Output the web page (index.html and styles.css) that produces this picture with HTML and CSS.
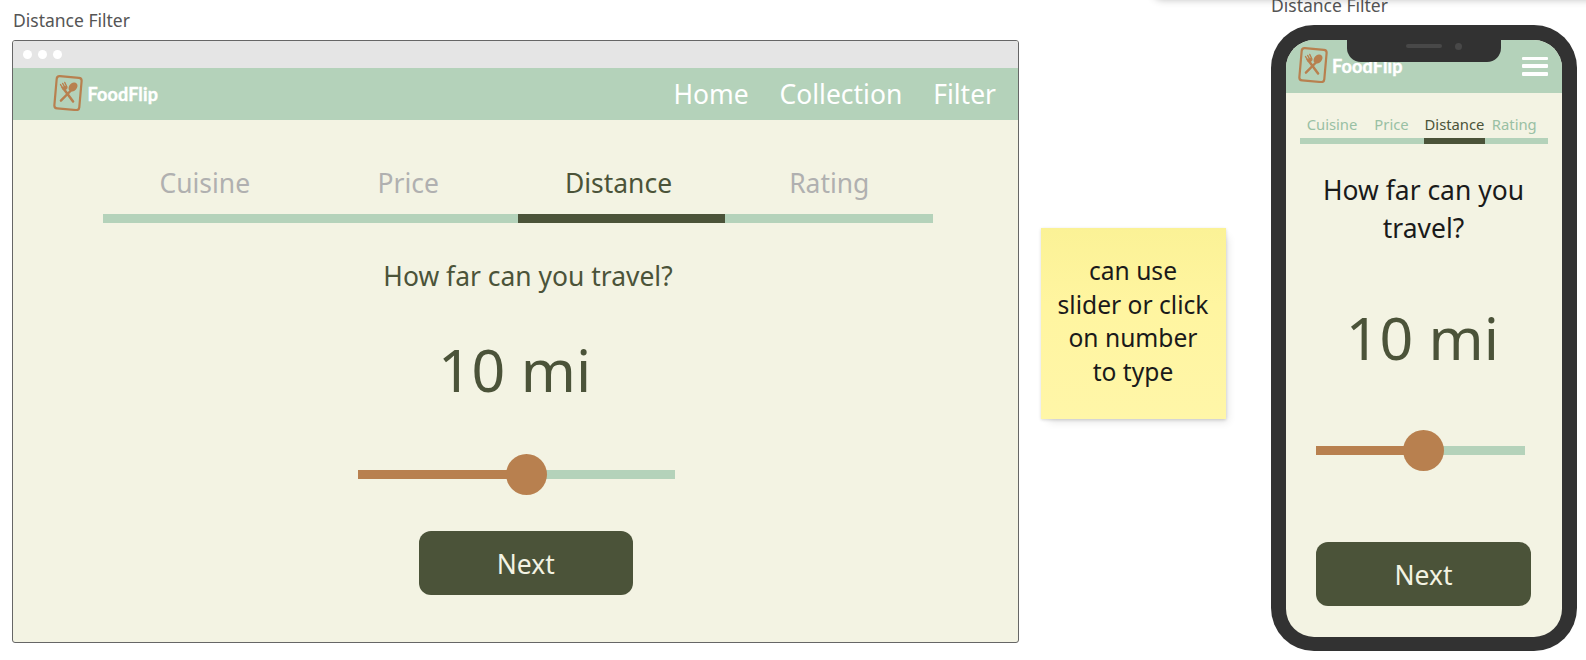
FILE: index.html
```html
<!DOCTYPE html>
<html lang="en">
<head>
<meta charset="utf-8">
<title>Distance Filter</title>
<link rel="stylesheet" href="styles.css">
</head>
<body>
<svg class="defs" aria-hidden="true">
  <symbol id="logo" viewBox="0 0 30 36">
    <g transform="rotate(5 15 18)" fill="none" stroke="#b8804f">
      <rect x="2.5" y="1.9" width="25" height="32.4" rx="3" stroke-width="2.2"/>
      <path d="M10.5 14.5 20.8 26" stroke-width="2.5" stroke-linecap="round"/>
      <path d="M17.5 15.5 8.6 26.2" stroke-width="2.4" stroke-linecap="round"/>
      <path d="M6.8 10.2 10 14.2M8.8 8.9 11.6 12.9M10.8 7.7 13.4 12.2" stroke-width="1.3" stroke-linecap="round"/>
      <path d="M8.3 13.2q2.8 4.2 5.2.1l-.6-2z" fill="#b8804f" stroke-width="1"/>
      <ellipse cx="19.5" cy="11.6" rx="3.8" ry="5.1" transform="rotate(40 19.5 11.6)" fill="#b8804f" stroke="none"/>
    </g>
  </symbol>
</svg>
<main class="board">
  <div class="toolbar"></div>
  <section class="desktop">
    <div class="frame-label">Distance Filter</div>
    <div class="window">
      <div class="chrome"><i></i><i></i><i></i></div>
      <header class="header">
        <div class="brand"><svg class="brand-icon"><use href="#logo"/></svg><span class="brand-name">FoodFlip</span></div>
        <nav class="nav"><a>Home</a><a>Collection</a><a>Filter</a></nav>
      </header>
      <div class="content">
        <div class="tabs">
          <div class="tab cuisine">Cuisine</div>
          <div class="tab price">Price</div>
          <div class="tab distance active">Distance</div>
          <div class="tab rating">Rating</div>
        </div>
        <div class="question">How far can you travel?</div>
        <div class="value">10 mi</div>
        <div class="slider"><div class="fill"></div><div class="knob"></div><div class="rest"></div></div>
        <div class="button">Next</div>
      </div>
    </div>
  </section>
  <aside class="note">can use<br>slider or click<br>on number<br>to type</aside>
  <section class="mobile">
    <div class="frame-label">Distance Filter</div>
    <div class="phone">
      <div class="notch"><span class="speaker"></span><span class="camera"></span></div>
      <div class="screen">
        <header class="header">
          <div class="brand"><svg class="brand-icon"><use href="#logo"/></svg><span class="brand-name">FoodFlip</span></div>
          <div class="menu"><i></i><i></i><i></i></div>
        </header>
        <div class="content">
          <div class="tabs">
            <div class="tab cuisine">Cuisine</div>
            <div class="tab price">Price</div>
            <div class="tab distance active">Distance</div>
            <div class="tab rating">Rating</div>
          </div>
          <div class="question">How far can you travel?</div>
          <div class="value">10 mi</div>
          <div class="slider"><div class="fill"></div><div class="knob"></div><div class="rest"></div></div>
          <div class="button">Next</div>
        </div>
      </div>
    </div>
  </section>
</main>
</body>
</html>
```
FILE: styles.css
```css
* { box-sizing: border-box; }
body { margin: 0; background: #fff; font-family: "Noto Sans", sans-serif; }
.defs { position: absolute; width: 0; height: 0; }
.board { position: relative; display: flex; align-items: flex-start; width: 1586px; height: 660px; overflow: hidden; }
.toolbar { position: absolute; left: 1154px; top: -20px; width: 460px; height: 19px; border-radius: 8px; box-shadow: 0 0 9px rgba(0,0,0,.3); }
.frame-label { color: #555; font-size: 17.5px; line-height: 24px; white-space: nowrap; }

.desktop { width: 1007px; margin-left: 12px; padding-top: 9px; }
.desktop .frame-label { height: 31px; padding-left: 1px; line-height: 23px; }
.window { height: 603px; border: 1px solid #666; border-radius: 3px; background: #f3f3e3; overflow: hidden; }
.chrome { display: flex; align-items: center; gap: 6px; height: 27px; padding-left: 10px; background: #e5e5e5; }
.chrome i { width: 9px; height: 9px; border-radius: 50%; background: #fff; }
.header { display: flex; background: #b4d2ba; }
.brand { display: flex; }
.brand-icon { width: 30px; height: 36px; }
.brand-name { color: #fff; font-family: Lato, sans-serif; font-size: 18px; font-weight: 700; line-height: 24px; letter-spacing: .15px; -webkit-text-stroke: .4px #fff; }
.window .header { height: 52.4px; padding-left: 40.4px; padding-right: 22px; justify-content: space-between; }
.window .brand { padding-top: 7px; }
.window .brand-name { margin: 7px 0 0 4px; }
.nav { display: flex; gap: 31px; color: #fff; font-size: 26.45px; line-height: 52px; }

.content { display: flex; flex-direction: column; }
.tabs { display: flex; }
.tab { text-align: center; border-bottom: 9px solid #b4d2ba; white-space: nowrap; }
.active { color: #4b5339; border-color: #4b5339; }
.window .tabs { width: 830px; margin: 41.6px 0 0 90px; font-size: 26.45px; line-height: 42px; }
.window .tab { width: 207.5px; height: 61px; color: #b0b0b0; }
.window .tab.active { width: 207px; color: #4b5339; }
.window .cuisine { padding-right: 4px; }
.window .price { padding-right: 12px; }
.window .distance { padding-right: 6px; }
.window .rating { padding-left: 1px; }

.question { font-size: 26.45px; line-height: 38px; text-align: center; }
.value { color: #4b5339; font-size: 59px; line-height: 80px; text-align: center; }
.window .question { width: 340px; margin: 34px 0 0 345px; color: #4b5339; }
.window .value { width: 340px; margin: 34px 0 0 331.5px; }

.slider { display: flex; align-items: center; height: 41px; }
.knob { position: relative; flex: none; width: 41px; height: 41px; margin: 0 -2px; border-radius: 50%; background: #b8804f; }
.fill { height: 9px; background: #b8804f; }
.rest { flex: 1; height: 9px; background: #b4d2ba; }
.window .slider { width: 317px; margin: 45px 0 0 344.5px; }
.window .fill { width: 150.5px; }
.button { display: flex; align-items: center; justify-content: center; width: 214.5px; height: 64px; padding-top: 1px; border-radius: 12px; background: #4b5339; color: #f3f3e3; font-size: 26.45px; }
.window .button { margin: 36.4px 0 0 405.5px; }

.note { width: 185px; height: 191px; margin: 228px 0 0 22px; padding: 26px 1px 0 0; background: linear-gradient(#fbf296, #fff5a0 40%, #fff6a8); box-shadow: 0 1px 3px rgba(0,0,0,.16), 5px 6px 8px -3px rgba(0,0,0,.1); color: #1a1a1a; font-size: 24.6px; line-height: 33.7px; text-align: center; }

.mobile { width: 305.5px; margin: -7px 0 0 45px; }
.mobile .frame-label { height: 31.5px; }
.phone { position: relative; height: 626.5px; padding: 15px; border-radius: 43px; background: #323232; }
.screen { height: 597px; border-radius: 28px; background: #f3f3e3; overflow: hidden; }
.notch { position: absolute; left: 76px; top: 14px; display: flex; align-items: center; width: 154px; height: 23px; padding: 0 0 8px 59px; border-radius: 0 0 14px 14px; background: #323232; }
.speaker { width: 36px; height: 4px; border-radius: 2px; background: #484848; }
.camera { width: 7px; height: 7px; margin-left: 13px; border-radius: 50%; background: #484848; }
.screen .header { height: 53.5px; padding: 7.5px 14px 0 11.5px; justify-content: space-between; }
.screen .brand-name { margin: 7px 0 0 4.5px; }
.menu { display: flex; flex-direction: column; gap: 4.1px; padding-top: 9.6px; }
.menu i { width: 26px; height: 3.8px; border-radius: 1px; background: #fff; }
.screen .tabs { margin: 19px 0 0 14px; font-size: 14.8px; line-height: 24px; }
.screen .tab { height: 32px; border-bottom-width: 6px; color: #99c0a4; }
.screen .tab.active { color: #4b5339; }
.screen .cuisine { width: 64px; }
.screen .price { width: 60px; padding-right: 5px; }
.screen .distance { width: 61px; }
.screen .rating { width: 62.5px; padding-right: 4px; }
.screen .question { width: 230px; margin: 27px 0 0 22.5px; color: #1a1a1a; }
.screen .value { width: 230px; margin: 49.5px 0 0 21.3px; }
.screen .slider { width: 208.5px; margin: 53.4px 0 0 30.3px; }
.screen .fill { width: 89px; }
.screen .button { margin: 71.4px 0 0 30.3px; }
```
